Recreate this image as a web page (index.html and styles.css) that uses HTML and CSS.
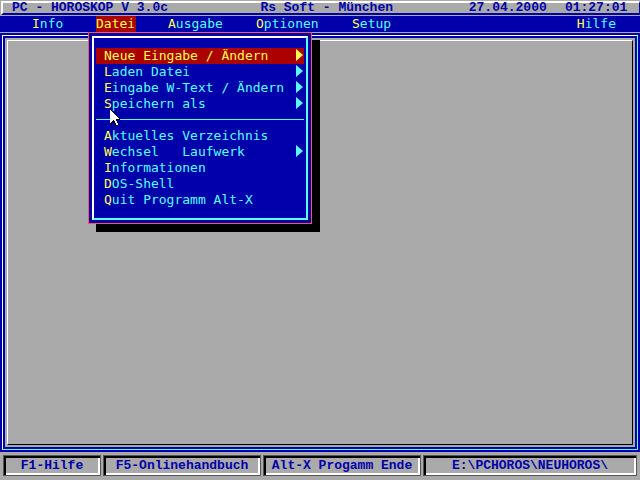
FILE: index.html
```html
<!DOCTYPE html>
<html lang="de">
<head>
  <meta charset="UTF-8">
  <meta name="viewport" content="width=device-width, initial-scale=1.0">
  <title>PC - HOROSKOP V 3.0c</title>
  <link rel="stylesheet" href="styles.css">
</head>
<body>

  <header class="title-bar">
    <span>PC - HOROSKOP V 3.0c</span>
    <span>Rs Soft - München</span>
    <span>27.04.2000</span>
    <span>01:27:01</span>
  </header>

  <nav class="menu-bar">
    <button class="menu-item"><b>I</b>nfo</button>
    <div class="menu-holder">
      <button class="menu-item open">Datei</button>
      <div class="dropdown">
        <div class="dropdown-inner">
          <button class="entry active"><span>Neue Eingabe / Ändern</span><svg class="arrow" viewBox="0 0 7 12"><path d="M0 0L7 6L0 12Z"/></svg></button>
          <button class="entry"><span><b>L</b>aden Datei</span><svg class="arrow" viewBox="0 0 7 12"><path d="M0 0L7 6L0 12Z"/></svg></button>
          <button class="entry"><span><b>E</b>ingabe W-Text / Ändern</span><svg class="arrow" viewBox="0 0 7 12"><path d="M0 0L7 6L0 12Z"/></svg></button>
          <button class="entry"><span><b>S</b>peichern als</span><svg class="arrow" viewBox="0 0 7 12"><path d="M0 0L7 6L0 12Z"/></svg></button>
          <hr class="divider">
          <button class="entry"><span><b>A</b>ktuelles Verzeichnis</span></button>
          <button class="entry"><span><b>W</b>echsel   Laufwerk</span><svg class="arrow" viewBox="0 0 7 12"><path d="M0 0L7 6L0 12Z"/></svg></button>
          <button class="entry"><span><b>I</b>nformationen</span></button>
          <button class="entry"><span><b>D</b>OS-Shell</span></button>
          <button class="entry"><span><b>Q</b>uit Programm Alt-X</span></button>
        </div>
        <svg class="pointer" viewBox="0 0 10 17" shape-rendering="crispEdges">
          <path fill="#000" d="M0 0h1v1h1v1h1v1h1v1h1v1h1v1h1v1h1v1h1v1h1v2h-3v2h1v2h1v1h-1v1h-2v-1h-1v-2h-1v-1h-1v1h-1v1h-2z"/>
          <path fill="#fff" d="M0 1h1v1h1v1h1v1h1v1h1v1h1v1h1v1h1v1h1v1h-3v2h1v2h1v2h-2v-2h-1v-2h-1v-1h-1v1h-1v1h-1v1h-1z"/>
        </svg>
      </div>
    </div>
    <button class="menu-item"><b>A</b>usgabe</button>
    <button class="menu-item"><b>O</b>ptionen</button>
    <button class="menu-item"><b>S</b>etup</button>
    <button class="menu-item help"><b>H</b>ilfe</button>
  </nav>

  <main class="desktop">
    <div class="frame">
      <div class="panel"></div>
    </div>
  </main>

  <footer class="status-bar">
    <button class="key">F1-Hilfe</button>
    <button class="key">F5-Onlinehandbuch</button>
    <button class="key">Alt-X Progamm Ende</button>
    <div class="key">E:\PCHOROS\NEUHOROS\</div>
  </footer>

</body>
</html>
```

FILE: styles.css
```css
* {
  box-sizing: border-box;
}

body {
  margin: 0;
  height: 100vh;
  display: flex;
  flex-direction: column;
  background-color: #aaaaaa;
  color: #0000aa;
  font-family: "DejaVu Sans Mono", monospace;
  font-size: 13px;
  line-height: 16px;
}

button {
  margin: 0;
  padding: 0;
  border: 0;
  background: none;
  color: inherit;
  font: inherit;
  text-align: left;
  white-space: pre;
}

b {
  color: #ffff55;
  font-weight: normal;
}

.title-bar {
  display: grid;
  grid-template-columns: 248fr 208fr 96fr 64fr;
  height: 14px;
  margin: 1px 0 0 1px;
  padding: 0 10px 0 9px;
  border: solid #0000aa;
  border-width: 2px 1px 2px 2px;
  border-top-color: #ffffff;
  border-left-color: #ffffff;
  font-family: "Liberation Mono", monospace;
  font-weight: bold;
  line-height: 10px;
  white-space: nowrap;
}

.menu-bar {
  display: grid;
  grid-template-columns: 32px 40px 56px 64px 40px 1fr;
  gap: 32px;
  height: 18px;
  padding: 0 24px 0 32px;
  border-top: 1px solid #aaaaaa;
  border-bottom: 1px solid #aaaaaa;
  background-color: #0000aa;
  color: #55ffff;
}

.menu-item {
  width: 100%;
  height: 16px;
}

.menu-item.open {
  background-color: #aa0000;
  color: #ffff55;
}

.menu-item.help {
  text-align: right;
}

.menu-holder {
  position: relative;
}

.dropdown {
  position: absolute;
  top: 16px;
  left: -8px;
  width: 224px;
  padding: 3px;
  border: 1px solid #ff5555;
  background-color: #0000aa;
  box-shadow: 8px 8px 0 #000000;
  z-index: 1;
}

.dropdown-inner {
  height: 184px;
  padding: 10px 2px;
  border: 2px solid #55ffff;
  border-top-color: #ffffff;
  border-left-color: #ffffff;
}

.entry {
  display: flex;
  justify-content: space-between;
  width: 100%;
  height: 16px;
  padding: 0 1px 0 8px;
}

.entry.active {
  background-color: #aa0000;
  color: #ffff55;
}

.arrow {
  width: 7px;
  height: 12px;
  margin-top: 1px;
  fill: currentColor;
}

.divider {
  height: 1px;
  margin: 7px 0 8px;
  border: 0;
  background-color: #55ffff;
}

.pointer {
  position: absolute;
  top: 76px;
  left: 21px;
  width: 10px;
  height: 17px;
}

.desktop {
  flex: 1;
  display: flex;
  padding: 2px;
  background-color: #0000aa;
}

.frame {
  flex: 1;
  display: flex;
  padding: 4px;
  border: 1px solid #55ffff;
  border-top-color: #ffffff;
  border-left-color: #ffffff;
  background-color: #aaaaaa;
  box-shadow: inset 0 0 0 2px #0000aa;
}

.panel {
  flex: 1;
  border: 1px solid #000000;
  border-top-color: #ffffff;
  border-left-color: #ffffff;
}

.status-bar {
  display: grid;
  grid-template-columns: 98fr 158fr 158fr 214fr;
  gap: 2px;
  padding: 3px 3px 4px;
}

.key {
  height: 21px;
  border: 1px solid #555555;
  box-shadow: inset 2px 2px 0 #000000, inset -2px -2px 0 #ffffff;
  color: #0000aa;
  font-family: "Liberation Mono", monospace;
  font-weight: bold;
  line-height: 19px;
  text-align: center;
}
```
